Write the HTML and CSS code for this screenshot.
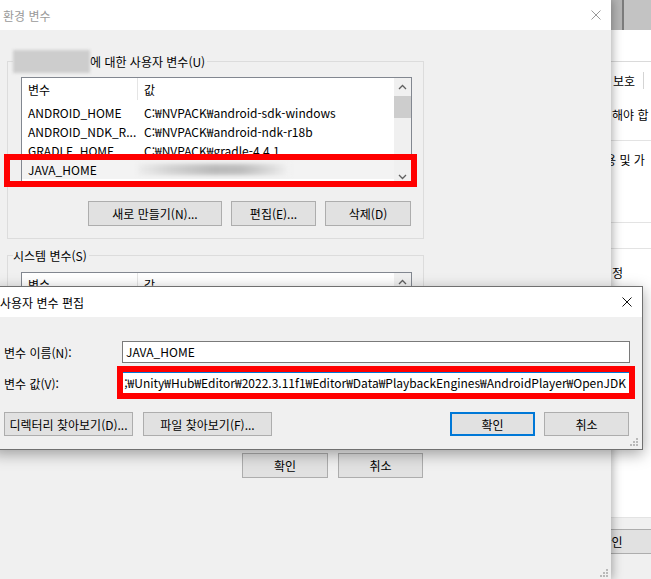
FILE: index.html
```html
<!DOCTYPE html>
<html lang="ko">
<head>
<meta charset="utf-8">
<title>환경 변수</title>
<link rel="stylesheet" href="styles.css">
</head>
<body>
<div class="win sysprops">
  <div class="sp-bar"></div>
  <div class="sp-gap"></div>
  <div class="sp-tabs"><span class="sp-tab">보호</span></div>
  <div class="sp-row sp-r1"><span>해야 합</span></div>
  <div class="sp-row sp-r2"><span>용 및 가</span></div>
  <div class="sp-row sp-r3"></div>
  <div class="sp-row sp-r4"><span>정</span></div>
  <div class="sp-foot"><button class="btn sp-btn">확인</button></div>
</div>

<div class="win envwin">
  <div class="titlebar">
    <span class="title inactive">환경 변수</span>
    <svg class="close" viewBox="0 0 10 10"><path d="M0.5 0.5 L9.5 9.5 M9.5 0.5 L0.5 9.5" stroke="#9a9a9a" stroke-width="1" fill="none"/></svg>
  </div>
  <div class="env-body">
    <fieldset class="group g-user">
      <legend><span class="blur-name"></span>에 대한 사용자 변수(U)</legend>
      <div class="list l-user">
        <div class="list-main">
          <div class="lv-head"><span class="c1">변수</span><span class="c2">값</span></div>
          <div class="lv-row"><span class="c1">ANDROID_HOME</span><span class="c2">C:₩NVPACK₩android-sdk-windows</span></div>
          <div class="lv-row"><span class="c1">ANDROID_NDK_R...</span><span class="c2">C:₩NVPACK₩android-ndk-r18b</span></div>
          <div class="lv-row"><span class="c1">GRADLE_HOME</span><span class="c2">C:₩NVPACK₩gradle-4.4.1</span></div>
          <div class="lv-row sel"><span class="c1">JAVA_HOME</span><span class="c2"><span class="blur-val"></span></span></div>
        </div>
        <div class="vscroll">
          <svg class="arrow" viewBox="0 0 17 17"><path d="M5 11 L8.5 7.5 L12 11" stroke="#606060" stroke-width="1.3" fill="none"/></svg>
          <span class="thumb"></span>
          <span class="track"></span>
          <svg class="arrow" viewBox="0 0 17 17"><path d="M5 7 L8.5 10.5 L12 7" stroke="#606060" stroke-width="1.3" fill="none"/></svg>
        </div>
      </div>
      <div class="btnrow">
        <button class="btn b-new">새로 만들기(N)...</button>
        <button class="btn b-edit">편집(E)...</button>
        <button class="btn b-del">삭제(D)</button>
      </div>
    </fieldset>

    <fieldset class="group g-sys">
      <legend>시스템 변수(S)</legend>
      <div class="list l-sys">
        <div class="list-main">
          <div class="lv-head"><span class="c1">변수</span><span class="c2">값</span></div>
        </div>
        <div class="vscroll">
          <svg class="arrow" viewBox="0 0 17 17"><path d="M5 11 L8.5 7.5 L12 11" stroke="#606060" stroke-width="1.3" fill="none"/></svg>
          <span class="track"></span>
        </div>
      </div>
    </fieldset>

    <div class="btnrow main-btns">
      <button class="btn b-ok">확인</button>
      <button class="btn b-cancel">취소</button>
    </div>
  </div>
  <svg class="grip" viewBox="0 0 12 12"><g fill="#b9b9b9"><rect x="9" y="3" width="2" height="2"/><rect x="6" y="6" width="2" height="2"/><rect x="9" y="6" width="2" height="2"/><rect x="3" y="9" width="2" height="2"/><rect x="6" y="9" width="2" height="2"/><rect x="9" y="9" width="2" height="2"/></g></svg>
</div>

<div class="win dialog">
  <div class="titlebar d-title">
    <span class="title">사용자 변수 편집</span>
    <svg class="close" viewBox="0 0 10 10"><path d="M0.5 0.5 L9.5 9.5 M9.5 0.5 L0.5 9.5" stroke="#111" stroke-width="1" fill="none"/></svg>
  </div>
  <div class="d-body">
    <div class="d-row">
      <label class="d-label">변수 이름(N):</label>
      <div class="d-input">JAVA_HOME</div>
    </div>
    <div class="d-row r2">
      <label class="d-label">변수 값(V):</label>
      <div class="d-input focus"><span class="val">;₩Unity₩Hub₩Editor₩2022.3.11f1₩Editor₩Data₩PlaybackEngines₩AndroidPlayer₩OpenJDK</span></div>
    </div>
    <div class="d-btns">
      <div class="d-group">
        <button class="btn w129">디렉터리 찾아보기(D)...</button>
        <button class="btn w129">파일 찾아보기(F)...</button>
      </div>
      <div class="d-group g9">
        <button class="btn w85 focus">확인</button>
        <button class="btn w85">취소</button>
      </div>
    </div>
  </div>
  <svg class="grip" viewBox="0 0 12 12"><g fill="#b9b9b9"><rect x="9" y="3" width="2" height="2"/><rect x="6" y="6" width="2" height="2"/><rect x="9" y="6" width="2" height="2"/><rect x="3" y="9" width="2" height="2"/><rect x="6" y="9" width="2" height="2"/><rect x="9" y="9" width="2" height="2"/></g></svg>
</div>

<div class="mark m1"></div>
<div class="mark m2"></div>
</body>
</html>
```

FILE: styles.css
```css
* { box-sizing: border-box; }
html, body { margin: 0; padding: 0; }
body {
  width: 651px;
  height: 579px;
  overflow: hidden;
  position: relative;
  background: #fff;
  font-family: "Noto Sans CJK KR", "Noto Sans", sans-serif;
  font-size: 12px;
  line-height: 17px;
  color: #000;
}
.win { position: absolute; }

.btn {
  font-family: inherit;
  font-size: 12px;
  line-height: 17px;
  color: #000;
  background: #e1e1e1;
  border: 1px solid #adadad;
  padding: 0;
  margin: 0;
  height: 25px;
  white-space: nowrap;
}
.btn.focus { border: 2px solid #0078d7; }

/* window behind on the right */
.sysprops {
  left: 600px; top: 0; width: 51px; height: 579px;
  background: #fff;
  display: flex; flex-direction: column;
  overflow: hidden;
  white-space: nowrap;
}
.sp-bar { height: 30px; flex: none; background: linear-gradient(90deg, #b6b6b6 0 22px, #7c7c7c 22px 24px, #c3c3c3 24px); }
.sp-gap { height: 31px; flex: none; }
.sp-tabs { height: 31px; flex: none; border-top: 1px solid #dadada; padding: 10px 0 0 13px; }
.sp-tab { display: inline-block; padding-right: 8px; border-right: 1px solid #d4d4d4; }
.sp-row { flex: none; border-bottom: 1px solid #e3e3e3; }
.sp-r1 { height: 49px; padding: 14px 0 0 12px; }
.sp-r2 { height: 82px; padding: 10px 0 0 5px; }
.sp-r3 { height: 26px; }
.sp-r4 { height: 269px; padding: 15px 0 0 12px; }
.sp-foot { flex: 1; background: #f0f0f0; padding-top: 11px; }
.sp-btn { margin-left: -31px; width: 85px; height: 25px; }

/* main environment variables window */
.envwin {
  left: -4px; top: 0; width: 615px; height: 579px;
  background: #f0f0f0;
  box-shadow: 0 0 10px 1px rgba(0,0,0,.35);
  display: flex; flex-direction: column;
}
.titlebar {
  height: 30px; flex: none;
  background: #fff;
  display: flex; align-items: center; justify-content: space-between;
  padding: 0 10px 0 7px;
}
.title.inactive { color: #9a9a9a; }
.close { width: 10px; height: 10px; display: block; }

.env-body { flex: 1; padding: 0 0 0 11px; display: flex; flex-direction: column; align-items: flex-start; }

.group {
  margin: 0;
  border: 1px solid #dcdcdc;
  width: 417px;
  min-width: 0;
  padding: 0 10px 12px 5px;
}
.group legend { padding: 0 2px 0 0; margin: 0; white-space: nowrap; }
.g-user { margin-top: 20px; }
.g-user legend { line-height: 23px; height: 23px; }
.blur-name {
  display: inline-block;
  width: 77px; height: 23px;
  vertical-align: top;
  background: #cdcdcd;
  filter: blur(1.5px);
}
.g-sys { margin-top: 8px; padding-bottom: 53px; }
.g-sys legend { padding-top: 0; }

.list {
  display: flex;
  margin-left: 8px;
  width: 391px;
  border: 1px solid #828790;
  background: #fff;
}
.l-user { margin-top: 4px; height: 109px; }
.l-sys { margin-top: 8px; height: 118px; }
.list-main { flex: 1; min-width: 0; overflow: hidden; white-space: nowrap; }
.lv-head { height: 25px; display: flex; padding-bottom: 3px; align-items: center; }
.lv-head .c1 { border-right: 1px solid #e5e5e5; align-self: stretch; display: flex; align-items: center; }
.lv-row { height: 19px; display: flex; align-items: center; }
.lv-row.sel { background: #f3f3f3; }
.c1 { width: 116px; flex: none; padding-left: 6px; }
.c2 { padding-left: 6px; display: flex; align-items: center; }
.blur-val {
  display: inline-block;
  width: 152px; height: 11px;
  margin-left: -6px;
  background: linear-gradient(90deg, #ececec 0%, #d2d2d2 22%, #bababa 50%, #bdbdbd 68%, #dcdcdc 88%, #f3f3f3 100%);
  filter: blur(2px);
}

.vscroll { width: 17px; flex: none; background: #f0f0f0; display: flex; flex-direction: column; }
.arrow { width: 17px; height: 17px; display: block; flex: none; }
.thumb { height: 22px; margin-top: 1px; background: #cdcdcd; flex: none; }
.track { flex: 1; }

.btnrow { display: flex; justify-content: flex-end; gap: 9px; margin-top: 15px; width: 100%; padding-right: 2px; }
.b-new { width: 134px; }
.b-edit { width: 85px; }
.b-del { width: 86px; }

.main-btns { width: 417px; gap: 10px; margin-top: 9px; padding-right: 1px; }
.b-ok { width: 86px; }
.b-cancel { width: 85px; }

.grip { position: absolute; right: 2px; bottom: 1px; width: 12px; height: 12px; }

/* edit dialog */
.dialog {
  left: -8px; top: 286px; width: 651px; height: 164px;
  background: #f0f0f0;
  border: 1px solid #707070;
  box-shadow: 0 4px 14px rgba(0,0,0,.35);
  display: flex; flex-direction: column;
}
.d-title { padding-right: 10px; }
.d-body { padding: 24px 0 0 11px; }
.d-row { display: flex; align-items: center; height: 22px; }
.d-row.r2 { margin-top: 9px; }
.d-label { width: 118px; flex: none; }
.d-input {
  width: 508px; height: 22px;
  background: #fff;
  border: 1px solid #7a7a7a;
  padding: 0 3px;
  line-height: 20px;
  white-space: nowrap;
  overflow: hidden;
}
.d-input.focus { border-color: #0078d7; display: flex; justify-content: flex-end; }
.d-input .val { flex: none; }
.d-btns { display: flex; justify-content: space-between; width: 625px; margin-top: 18px; }
.d-group { display: flex; gap: 10px; }
.d-group.g9 { gap: 9px; }
.d-btns .btn { height: 24px; }
.w129 { width: 129px; }
.w85 { width: 85px; }
.dialog .grip { right: 3px; bottom: 2px; }

/* red annotation boxes */
.mark { position: absolute; border: 6px solid #f00; }
.m1 { left: 4px; top: 154px; width: 413px; height: 33px; }
.m2 { left: 117px; top: 366px; width: 518px; height: 33px; }
```
